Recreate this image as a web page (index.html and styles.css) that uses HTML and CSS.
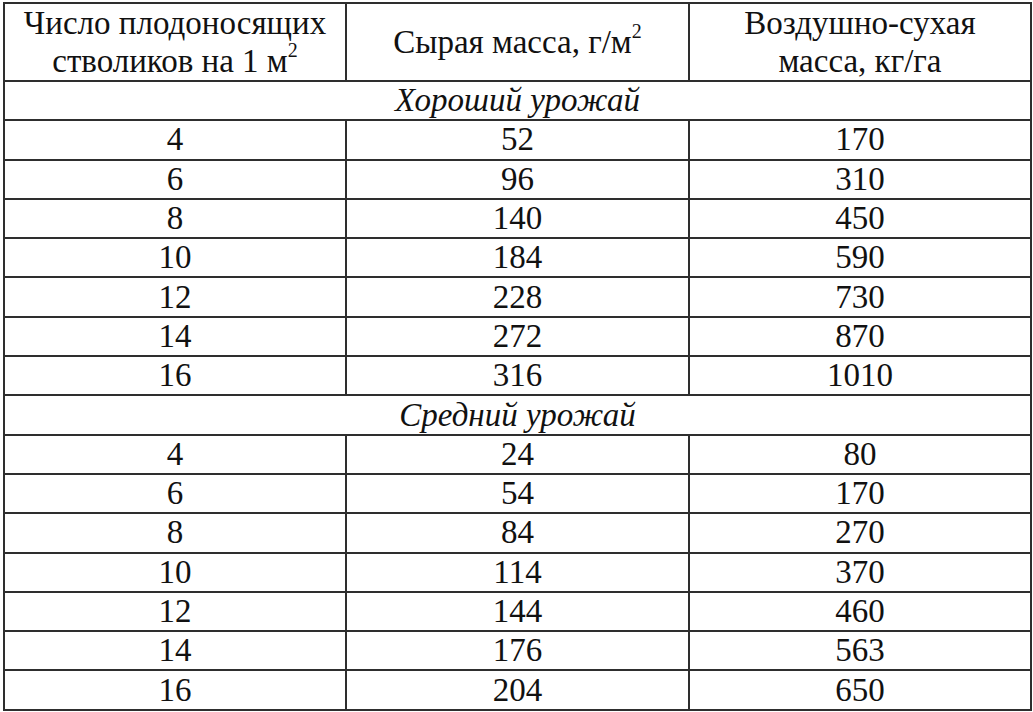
FILE: index.html
```html
<!DOCTYPE html>
<html lang="ru">
<head>
<meta charset="utf-8">
<title>Таблица</title>
<link rel="stylesheet" href="styles.css">
</head>
<body>
<table class="data">
  <colgroup><col class="c1"><col class="c2"><col class="c3"></colgroup>
  <thead>
    <tr class="head">
      <th>Число плодоносящих<br>стволиков на 1 м<sup>2</sup></th>
      <th>Сырая масса, г/м<sup>2</sup></th>
      <th>Воздушно-сухая<br>масса, кг/га</th>
    </tr>
  </thead>
  <tbody>
    <tr class="section"><td colspan="3">Хороший урожай</td></tr>
    <tr><td>4</td><td>52</td><td>170</td></tr>
    <tr><td>6</td><td>96</td><td>310</td></tr>
    <tr><td>8</td><td>140</td><td>450</td></tr>
    <tr><td>10</td><td>184</td><td>590</td></tr>
    <tr><td>12</td><td>228</td><td>730</td></tr>
    <tr><td>14</td><td>272</td><td>870</td></tr>
    <tr><td>16</td><td>316</td><td>1010</td></tr>
    <tr class="section"><td colspan="3">Средний урожай</td></tr>
    <tr><td>4</td><td>24</td><td>80</td></tr>
    <tr><td>6</td><td>54</td><td>170</td></tr>
    <tr><td>8</td><td>84</td><td>270</td></tr>
    <tr><td>10</td><td>114</td><td>370</td></tr>
    <tr><td>12</td><td>144</td><td>460</td></tr>
    <tr><td>14</td><td>176</td><td>563</td></tr>
    <tr><td>16</td><td>204</td><td>650</td></tr>
  </tbody>
</table>
</body>
</html>
```

FILE: styles.css
```css
html, body {
  margin: 0;
  padding: 0;
  background: #ffffff;
}

body {
  padding: 2px 0 0 3px;
  font-family: "Liberation Serif", "Times New Roman", serif;
  color: #111111;
}

.data {
  width: 1027px;
  border-collapse: collapse;
  table-layout: fixed;
  font-size: 33px;
}

.c1 { width: 342px; }
.c2 { width: 343px; }
.c3 { width: 342px; }

.data th,
.data td {
  border: 2px solid #2e2e2e;
  padding: 0;
  text-align: center;
  vertical-align: middle;
  font-weight: normal;
  line-height: 38px;
}

.head th {
  height: 76px;
}

.data tbody td {
  height: 37.3px;
  line-height: 37px;
}

.section td {
  font-style: italic;
}

sup {
  font-size: 20px;
  line-height: 0;
  vertical-align: 15px;
}
```
